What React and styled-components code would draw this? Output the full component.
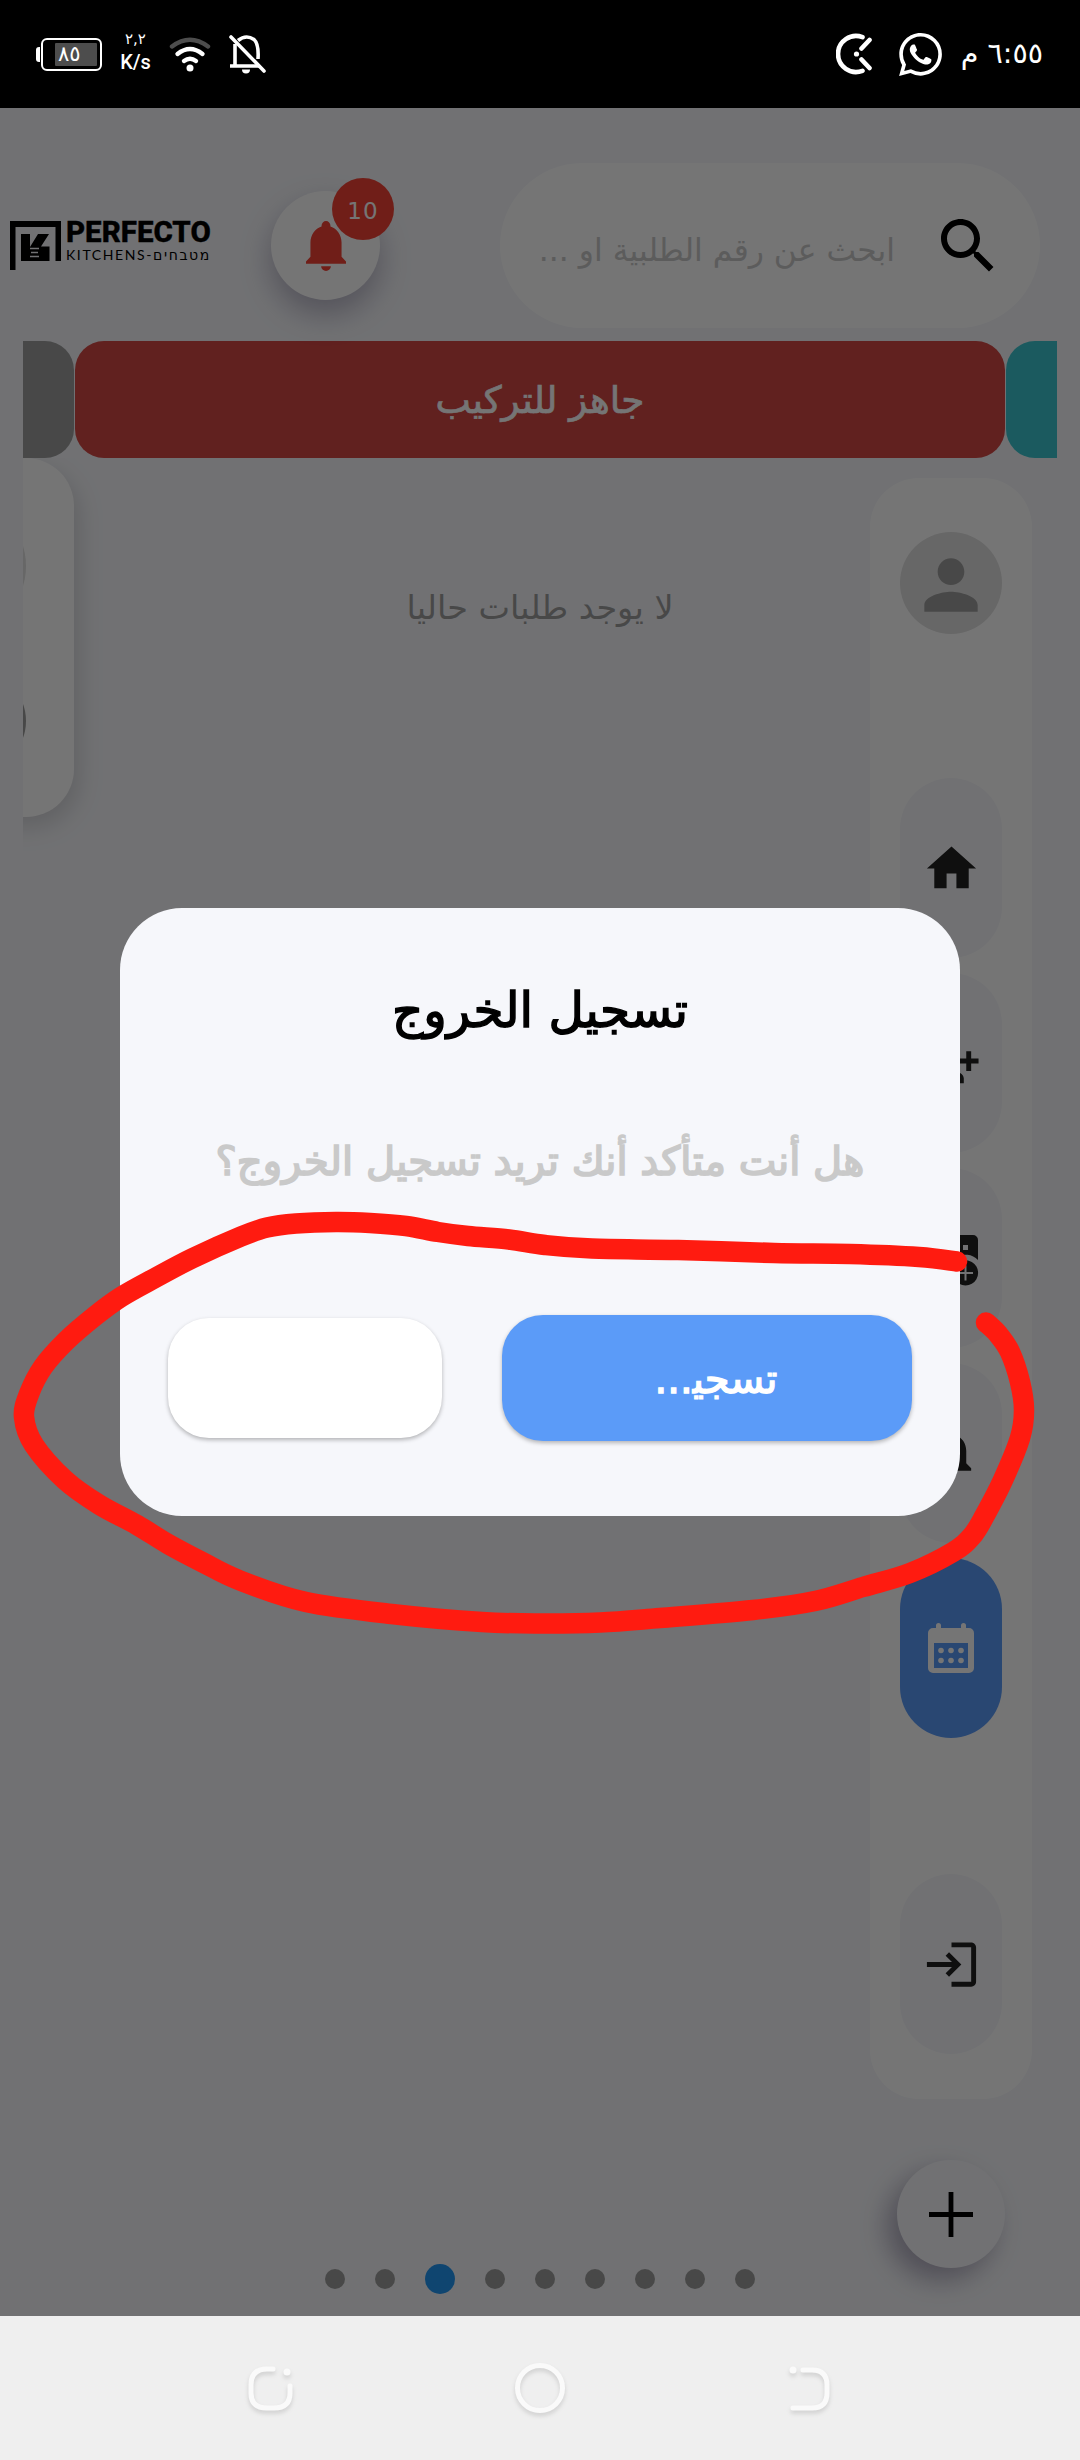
import React from "react";
import styled, { createGlobalStyle } from "styled-components";

const Global = createGlobalStyle`
  *{box-sizing:border-box;}
  html,body{margin:0;padding:0;background:#f6f7fb;}
  body{font-family:"DejaVu Sans","Noto Sans",sans-serif;}
`;

const Screen = styled.div`
  position:relative;width:1080px;height:2460px;overflow:hidden;
  display:flex;flex-direction:column;direction:rtl;background:#f6f7fb;
`;

/* ---------- status bar ---------- */
const StatusBar = styled.header`
  height:108px;flex:none;background:#000;color:#fff;direction:ltr;
  display:flex;align-items:center;justify-content:space-between;padding:0 37px 0 36px;
`;
const StatusGroup = styled.div`display:flex;align-items:center;gap:${p => p.$gap}px;`;
const Clock = styled.span`direction:rtl;font-size:28.5px;line-height:40px;margin-left:-7px;white-space:nowrap;`;
const Battery = styled.div`display:flex;align-items:center;gap:1px;`;
const BatteryNub = styled.span`width:4px;height:15px;border-radius:3px 0 0 3px;background:#fff;`;
const BatteryBody = styled.span`
  width:61px;height:33px;border:2.5px solid #fff;border-radius:6px;padding:3px;display:flex;justify-content:flex-end;
`;
const BatteryFill = styled.span`
  width:42px;background:#4d4d4d;border-radius:1px;font-size:21px;line-height:22px;padding-left:3px;
`;
const Speed = styled.div`
  display:flex;flex-direction:column;align-items:center;width:32px;
  font:500 20px/29px Roboto,"DejaVu Sans",sans-serif;
  small{font-size:15px;line-height:17px;font-family:"DejaVu Sans",sans-serif;}
`;

/* ---------- application ---------- */
const AppArea = styled.main`height:2208px;flex:none;display:flex;flex-direction:column;background:#f6f7fb;`;
const TopBar = styled.div`
  height:233px;flex:none;display:flex;align-items:center;
  padding:42px 40px 13px 9px;
`;
const SearchBox = styled.div`
  width:540px;height:165px;margin-top:13px;border-radius:83px;background:#fff;display:flex;align-items:center;
  padding:0 36px 0 20px;gap:37px;flex:none;
`;
const Hint = styled.span`flex:1;font-size:31.4px;color:#c8c8c8;white-space:nowrap;margin-top:8px;`;
const BellButton = styled.div`
  position:relative;width:109px;height:109px;border-radius:50%;background:#fff;flex:none;
  display:flex;align-items:center;justify-content:center;margin-top:13px;margin-right:120px;
  box-shadow:0 14px 30px rgba(60,50,90,.34);
`;
const Badge = styled.span`
  position:absolute;left:61px;top:-13px;width:62px;height:62px;border-radius:50%;background:#f44336;color:#fff;
  display:flex;align-items:center;justify-content:center;font-size:23px;letter-spacing:1px;direction:ltr;padding-top:4px;
`;
const Logo = styled.div`
  display:flex;direction:ltr;gap:4px;width:203px;margin-top:12px;margin-right:58px;align-items:flex-start;flex:none;
`;
const LogoText = styled.div`display:flex;flex-direction:column;width:146px;color:#000;`;
const Brand = styled.span`
  font:800 29.5px/22px Roboto,sans-serif;-webkit-text-stroke:.4px #000;white-space:nowrap;
`;
const BrandSub = styled.span`
  margin-top:5px;font:400 14px/14px Lato,"DejaVu Sans",sans-serif;letter-spacing:1.6px;white-space:nowrap;
`;

const Carousel = styled.div`
  height:117px;flex:none;margin:0 23px;display:flex;overflow:hidden;justify-content:space-between;
`;
const Tab = styled.div`
  width:${p => p.$w}px;flex:none;background:${p => p.$bg};color:#fff;
  border-radius:${p => p.$r};display:flex;align-items:center;justify-content:center;
  font-size:37.5px;-webkit-text-stroke:.7px #fff;
`;

const Body = styled.div`flex:1;display:flex;padding:0 48px 0 23px;justify-content:space-between;`;
const SideColumn = styled.div`
  width:162px;padding-top:20px;display:flex;flex-direction:column;align-items:center;
`;
const SideRail = styled.nav`
  width:162px;height:1621px;border-radius:49px;background:#fff;flex:none;
  display:flex;flex-direction:column;align-items:center;padding-top:54px;
`;
const Avatar = styled.div`
  width:102px;height:102px;border-radius:50%;background:#e0e0e0;display:flex;align-items:center;justify-content:center;
  padding-top:3px;margin-bottom:144px;flex:none;
`;
const NavList = styled.div`display:flex;flex-direction:column;gap:15px;`;
const NavItem = styled.div`
  width:102px;height:180px;border-radius:51px;background:${p => (p.$active ? "#5b9bf8" : "#f6f7fb")};
  display:flex;align-items:center;justify-content:center;flex:none;
`;
const NavBottom = styled.div`margin-top:136px;`;
const Fab = styled.button`
  width:108px;height:108px;margin-top:61px;border:0;padding:0;border-radius:50%;background:#f6f7fb;flex:none;
  display:flex;align-items:center;justify-content:center;box-shadow:-10px 12px 26px rgba(60,50,90,.38);
`;
const CenterColumn = styled.div`
  flex:1;display:flex;flex-direction:column;align-items:center;justify-content:space-between;
  padding:0 0 22px 75px;
`;
const Empty = styled.p`
  margin:128px 0 0;font-size:33.5px;line-height:44px;color:#9e9e9e;white-space:nowrap;
`;
const Dots = styled.div`display:flex;direction:ltr;gap:30px;align-items:center;`;
const Dot = styled.span`
  width:${p => (p.$on ? 30 : 20)}px;height:${p => (p.$on ? 30 : 20)}px;border-radius:50%;
  background:${p => (p.$on ? "#2196f3" : "#9e9e9e")};
`;
const PeekClip = styled.div`width:112px;height:420px;overflow:hidden;direction:ltr;`;
const PeekCard = styled.div`
  width:120px;height:359px;margin-left:-69px;border-radius:48px;background:#fff;overflow:hidden;
`;
const PeekShadow = styled.div`width:fit-content;filter:drop-shadow(5px 10px 12px rgba(0,0,0,.14));`;

/* ---------- system navigation ---------- */
const SystemNav = styled.footer`
  height:144px;flex:none;background:#efefef;direction:ltr;display:flex;align-items:center;justify-content:space-between;
  padding:0 240px;
  svg{filter:drop-shadow(0 3px 2px rgba(0,0,0,.13));}
`;

/* ---------- dialog ---------- */
const Overlay = styled.div`
  position:absolute;left:0;right:0;top:108px;height:2208px;background:rgba(0,0,0,.54);
  display:flex;flex-direction:column;align-items:center;padding-top:800px;
`;
const Dialog = styled.section`
  width:840px;height:608px;border-radius:62px;background:#f6f7fb;
  display:flex;flex-direction:column;align-items:center;padding:72px 48px 0;
`;
const Title = styled.h2`
  margin:0;font-weight:400;font-size:48.5px;line-height:60px;color:#000;-webkit-text-stroke:1.5px #000;white-space:nowrap;
`;
const Message = styled.p`
  margin:91px 0 0;font-weight:400;font-size:40px;line-height:60px;color:#c9c9c9;-webkit-text-stroke:1.7px #c9c9c9;
  white-space:nowrap;
`;
const Actions = styled.div`
  width:100%;margin-top:124px;display:flex;justify-content:space-between;align-items:center;
`;
const Action = styled.button`
  width:${p => (p.$primary ? 410 : 274)}px;height:${p => (p.$primary ? 126 : 120)}px;border:0;border-radius:41px;
  background:${p => (p.$primary ? "#5b9bf8" : "#fff")};color:#fff;
  box-shadow:0 2px 4px rgba(0,0,0,.28);
  font:400 40px "DejaVu Sans",sans-serif;-webkit-text-stroke:1.4px #fff;direction:rtl;padding:2px 0 0 18px;
`;

const Scribble = styled.svg`position:absolute;left:0;top:0;pointer-events:none;`;

const strokePoints = [
  [957, 1261.5], [919, 1257], [850, 1254], [774, 1253], [678, 1250], [592, 1248.6], [545, 1245], [509, 1239.5],
  [468, 1236], [438, 1232], [406, 1226], [370, 1223], [336, 1222], [296, 1223.5], [267, 1227.5], [241, 1236.5],
  [193, 1258], [155, 1278], [121, 1297], [95, 1316], [66, 1341], [43, 1367], [29, 1394], [24, 1417], [34, 1445],
  [65, 1480], [99, 1504.5], [137, 1525], [168, 1544], [202, 1562], [240, 1580.5], [306, 1602], [396, 1614.5],
  [482, 1622], [540, 1623.5], [600, 1622.5], [660, 1618], [753, 1610], [815, 1601], [863, 1587], [910, 1573],
  [953, 1552], [972, 1536], [985, 1515], [1003, 1480], [1020, 1438], [1024, 1410], [1020, 1382], [1010, 1352],
  [998, 1334], [986, 1322.5],
];
const smooth = pts => {
  let d = `M${pts[0][0]} ${pts[0][1]}`;
  for (let i = 0; i < pts.length - 1; i++) {
    const a = pts[i - 1] || pts[i], b = pts[i], c = pts[i + 1], e = pts[i + 2] || c;
    d += `C${b[0] + (c[0] - a[0]) / 6} ${b[1] + (c[1] - a[1]) / 6} ${c[0] - (e[0] - b[0]) / 6} ${c[1] - (e[1] - b[1]) / 6} ${c[0]} ${c[1]}`;
  }
  return d;
};

const Icon = ({ d, size = 59, fill = "#212121" }) => (
  <svg width={size} height={size} viewBox="0 0 24 24" fill={fill}><path d={d} /></svg>
);

const P = {
  search: "M15.5 14h-.79l-.28-.27C15.41 12.59 16 11.11 16 9.5 16 5.91 13.09 3 9.5 3S3 5.91 3 9.5 5.91 16 9.5 16c1.61 0 3.09-.59 4.23-1.57l.27.28v.79l5 4.99L20.49 19l-4.99-5zm-6 0C7.01 14 5 11.99 5 9.5S7.01 5 9.5 5 14 7.01 14 9.5 11.99 14 9.5 14z",
  person: "M12 12c2.21 0 4-1.79 4-4s-1.79-4-4-4-4 1.79-4 4 1.79 4 4 4zm0 2c-2.67 0-8 1.34-8 4v2h16v-2c0-2.66-5.33-4-8-4z",
  home: "M10 20v-6h4v6h5v-8h3L12 3 2 12h3v8z",
  personAdd: "M13 8c0-2.21-1.79-4-4-4S5 5.79 5 8s1.79 4 4 4 4-1.79 4-4zm2 2v2h3v3h2v-3h3v-2h-3V7h-2v3h-3zM1 18v2h16v-2c0-2.66-5.33-4-8-4s-8 1.34-8 4z",
  notifications: "M12 22c1.1 0 2-.9 2-2h-4c0 1.1.89 2 2 2zm6-6v-5c0-3.07-1.64-5.64-4.5-6.32V4c0-.83-.67-1.5-1.5-1.5s-1.5.67-1.5 1.5v.68C7.63 5.36 6 7.92 6 11v5l-2 2v1h16v-1l-2-2z",
  login: "M11 7 9.6 8.4l2.6 2.6H2v2h10.2l-2.6 2.6L11 17l5-5-5-5zm9 12h-8v2h8c1.1 0 2-.9 2-2V5c0-1.1-.9-2-2-2h-8v2h8v14z",
};

const BellIcon = () => (
  <svg width="40" height="50" viewBox="3 2 18 21" preserveAspectRatio="none" fill="#f44336">
    <path d="M21 19V20H3V19L5 17V11C5 7.9 7.03 5.17 10 4.29V4A2 2 0 0 1 14 4V4.29C16.97 5.17 19 7.9 19 11V17L21 19M14.200 21A2.200 2 0 0 1 9.800 21" />
  </svg>
);

const CalendarIcon = () => (
  <svg width="46" height="50" viewBox="0 0 46 50">
    <path fill="#fff" fillRule="evenodd" d="M8 5V2.500a2.500 2.500 0 0 1 5 0V5H33V2.500a2.500 2.500 0 0 1 5 0V5h3a5 5 0 0 1 5 5V45a5 5 0 0 1-5 5H5a5 5 0 0 1-5-5V10a5 5 0 0 1 5-5zM6 20V45H40V20z" />
    {[13, 23, 33].map(x => [27.5, 37.5].map(y => <circle key={x + "-" + y} cx={x} cy={y} r="2.8" fill="#fff" />))}
  </svg>
);

const StorePlusIcon = () => (
  <svg width="56" height="56" viewBox="0 0 56 56" fill="#212121">
    <path fillRule="evenodd" d="M5 5H50a5 5 0 0 1 5 5V30A18 18 0 0 0 25 48H5a5 5 0 0 1-5-5V10a5 5 0 0 1 5-5zM40 15v5h5v-5z" />
    <path fillRule="evenodd" d="M42.500 30.300a12.600 12.600 0 1 0 .01 0zM41.500 35.500h2v6.500h6.500v2h-6.500v6.500h-2V44H35V42H41.500z" />
  </svg>
);

const WifiIcon = () => (
  <svg width="42" height="35" viewBox="0 0 42 35" fill="none" strokeWidth="4.4" strokeLinecap="round">
    <path d="M3 9.500Q21-4 39 9.500" stroke="#4d4d4d" />
    <path d="M8.500 17Q21 7 33.500 17M15 24Q21 19.500 27 24" stroke="#fff" />
    <circle cx="21" cy="31" r="3.500" fill="#fff" />
  </svg>
);

const BellOffIcon = () => (
  <svg width="37" height="39" viewBox="0 0 37 39" fill="none" stroke="#fff" strokeWidth="3.600">
    <path d="M6 9V31M1 31H30M9 5.500Q17-1 25 4.500Q30 9 29 24" />
    <path d="M2 2 35 36" strokeLinecap="round" />
    <path d="M13 34.500h8a4 4 0 0 1-8 0z" fill="#fff" stroke="none" />
  </svg>
);

const TimerIcon = () => (
  <svg width="37" height="42" viewBox="0 0 37 42" fill="none" stroke="#fff" strokeWidth="4.600" strokeLinecap="round">
    <path d="M26.500 4.200A18 18 0 1 0 26.500 37.800M25.500 15.500l8-8.500M25.500 26.500l8 8.500" />
    <circle cx="20.500" cy="21" r="2.600" fill="#fff" stroke="none" />
  </svg>
);

const ChatPhoneIcon = () => (
  <svg width="43" height="43" viewBox="0 0 24 24" fill="#fff">
    <path d="M17.472 14.382c-.297-.149-1.758-.867-2.030-.967-.273-.099-.471-.148-.670.150-.197.297-.767.966-.940 1.164-.173.199-.347.223-.644.075-.297-.150-1.255-.463-2.390-1.475-.883-.788-1.480-1.761-1.653-2.059-.173-.297-.018-.458.130-.606.134-.133.298-.347.446-.520.149-.174.198-.298.298-.497.099-.198.050-.371-.025-.520-.075-.149-.669-1.612-.916-2.207-.242-.579-.487-.500-.669-.510-.173-.008-.371-.010-.570-.010-.198 0-.520.074-.792.372-.272.297-1.040 1.016-1.040 2.479 0 1.462 1.065 2.875 1.213 3.074.149.198 2.096 3.200 5.077 4.487.709.306 1.262.489 1.694.625.712.227 1.360.195 1.871.118.571-.085 1.758-.719 2.006-1.413.248-.694.248-1.289.173-1.413-.074-.124-.272-.198-.570-.347M12.050 21.785a9.870 9.870 0 0 1-5.031-1.378l-.361-.214-3.741.982.998-3.648-.235-.374a9.860 9.860 0 0 1-1.510-5.260c.001-5.450 4.436-9.884 9.888-9.884a9.825 9.825 0 0 1 9.881 9.892c-.003 5.450-4.437 9.884-9.889 9.884m8.413-18.297A11.815 11.815 0 0 0 12.050 0C5.495 0 .160 5.335.157 11.892c0 2.096.547 4.142 1.588 5.945L.057 24l6.305-1.654a11.882 11.882 0 0 0 5.683 1.448h.005c6.554 0 11.890-5.335 11.893-11.893a11.821 11.821 0 0 0-3.480-8.413z" />
  </svg>
);

const LogoMark = () => (
  <svg width="52" height="49" viewBox="0 0 52 49">
    <path d="M0 0H51V40H45.500V6H5.500V49H0z" />
    <path d="M11 13H20V26L28 13H39L31 25.500H39.500V40H11z" />
    <path d="M20 27.500h9M21 31.500h7M20 35.500h9" stroke="#f6f7fb" strokeWidth="1.500" />
  </svg>
);

export default function App() {
  return (
    <>
      <Global />
      <Screen>
        <StatusBar>
          <StatusGroup $gap={17.5}>
            <Battery><BatteryNub /><BatteryBody><BatteryFill>٨٥</BatteryFill></BatteryBody></Battery>
            <Speed><small>٢,٢</small>K/s</Speed>
            <WifiIcon />
            <BellOffIcon />
          </StatusGroup>
          <StatusGroup $gap={26}>
            <TimerIcon /><ChatPhoneIcon /><Clock>٦:٥٥ م</Clock>
          </StatusGroup>
        </StatusBar>

        <AppArea>
          <TopBar>
            <SearchBox>
              <Icon d={P.search} size={72} fill="#000" />
              <Hint>ابحث عن رقم الطلبية او ...</Hint>
            </SearchBox>
            <BellButton><BellIcon /><Badge>10</Badge></BellButton>
            <Logo>
              <LogoMark />
              <LogoText><Brand>PERFECTO</Brand><BrandSub>KITCHENS-מטבחים</BrandSub></LogoText>
            </Logo>
          </TopBar>

          <Carousel>
            <Tab $w={51} $bg="#3bc5cf" $r="29px 0 0 29px" />
            <Tab $w={930} $bg="#d34845" $r="29px">جاهز للتركيب</Tab>
            <Tab $w={51} $bg="#9e9e9e" $r="0 29px 29px 0" />
          </Carousel>

          <Body>
            <SideColumn>
              <SideRail>
                <Avatar><Icon d={P.person} size={80} fill="#9e9e9e" /></Avatar>
                <NavList>
                  <NavItem><Icon d={P.home} /></NavItem>
                  <NavItem><Icon d={P.personAdd} /></NavItem>
                  <NavItem><StorePlusIcon /></NavItem>
                  <NavItem><Icon d={P.notifications} /></NavItem>
                  <NavItem $active><CalendarIcon /></NavItem>
                </NavList>
                <NavBottom><NavItem><Icon d={P.login} /></NavItem></NavBottom>
              </SideRail>
              <Fab>
                <svg width="44" height="45" viewBox="0 0 44 45"><path d="M22 0V45M0 22.500H44" stroke="#000" strokeWidth="4.800" /></svg>
              </Fab>
            </SideColumn>
            <CenterColumn>
              <Empty>لا يوجد طلبات حاليا</Empty>
              <Dots>{[0, 1, 2, 3, 4, 5, 6, 7, 8].map(i => <Dot key={i} $on={i === 2} />)}</Dots>
            </CenterColumn>
            <PeekClip>
              <PeekShadow>
                <PeekCard>
                  <svg width="120" height="359">
                    <circle cx="4" cy="108" r="68" fill="#e0e0e0" />
                    <circle cx="22" cy="263" r="50" fill="#9e9e9e" />
                  </svg>
                </PeekCard>
              </PeekShadow>
            </PeekClip>
          </Body>
        </AppArea>

        <SystemNav>
          <svg width="60" height="60" viewBox="0 0 60 60" fill="none" stroke="#fafafa" strokeWidth="5" strokeLinecap="round">
            <path d="M33 11H27Q11 11 11 27V35Q11 50 27 50H34Q50 50 50 35V28" /><circle cx="47" cy="14" r="3.500" fill="#fafafa" stroke="none" />
          </svg>
          <svg width="60" height="60" viewBox="0 0 60 60" fill="none" stroke="#fafafa" strokeWidth="5"><circle cx="30" cy="30" r="22.500" /></svg>
          <svg width="60" height="60" viewBox="0 0 60 60" fill="none" stroke="#fafafa" strokeWidth="5" strokeLinecap="round">
            <path d="M23 12H32Q47 12 47 27V35Q47 50 32 50H13" /><circle cx="13" cy="12" r="3.500" fill="#fafafa" stroke="none" />
          </svg>
        </SystemNav>

        <Overlay>
          <Dialog>
            <Title>تسجيل الخروج</Title>
            <Message>هل أنت متأكد أنك تريد تسجيل الخروج؟</Message>
            <Actions>
              <Action $primary>{"تسجي\u200d..."}</Action>
              <Action aria-hidden="true" />
            </Actions>
          </Dialog>
        </Overlay>

        <Scribble width="1080" height="2460" viewBox="0 0 1080 2460">
          <path d={smooth(strokePoints)} fill="none" stroke="#ff1b10" strokeWidth="20.500" strokeLinecap="round" strokeLinejoin="round" />
        </Scribble>
      </Screen>
    </>
  );
}
